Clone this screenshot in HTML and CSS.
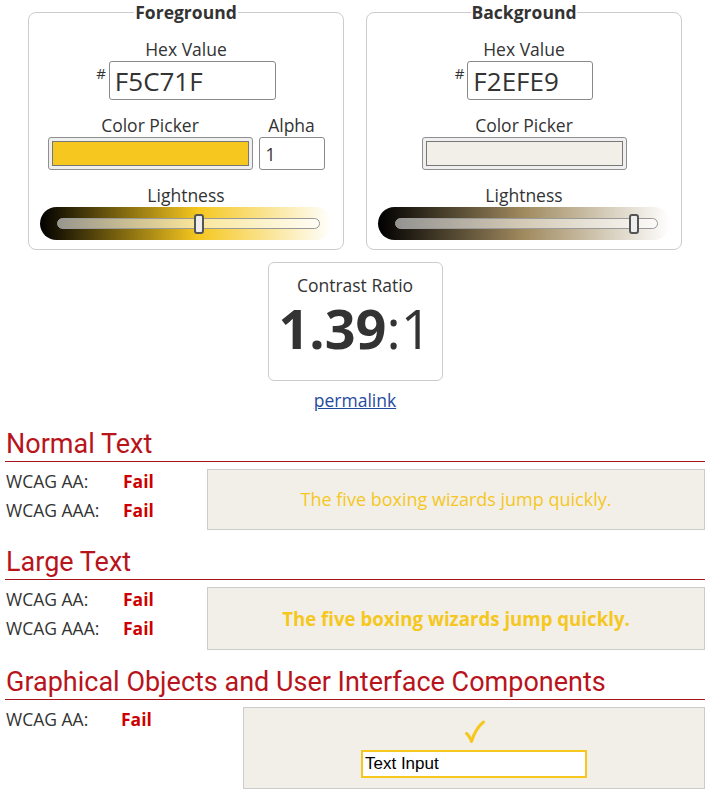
FILE: index.html
```html
<!DOCTYPE html>
<html lang="en">
<head>
<meta charset="utf-8">
<title>Contrast Checker</title>
<link rel="stylesheet" href="styles.css">
</head>
<body>
<main class="page">
  <div class="pickers">
    <fieldset class="picker">
      <legend>Foreground</legend>
      <div class="label">Hex Value</div>
      <div class="hex-row"><span class="hash">#</span><input class="hex hex-fg" type="text" value="F5C71F"></div>
      <div class="cp-row">
        <div class="cp-col">
          <div class="label">Color Picker</div>
          <input class="swatch" type="color" value="#f5c71f">
        </div>
        <div class="cp-col">
          <div class="label">Alpha</div>
          <input class="alpha" type="text" value="1">
        </div>
      </div>
      <div class="label">Lightness</div>
      <input class="slider slider-fg" type="range" min="0" max="100" value="54">
    </fieldset>
    <fieldset class="picker">
      <legend>Background</legend>
      <div class="label">Hex Value</div>
      <div class="hex-row"><span class="hash">#</span><input class="hex hex-bg" type="text" value="F2EFE9"></div>
      <div class="cp-row">
        <div class="cp-col">
          <div class="label">Color Picker</div>
          <input class="swatch" type="color" value="#f2efe9">
        </div>
      </div>
      <div class="label">Lightness</div>
      <input class="slider slider-bg" type="range" min="0" max="100" value="93">
    </fieldset>
  </div>

  <div class="ratio-box">
    <div class="ratio-label">Contrast Ratio</div>
    <div class="ratio"><b>1.39</b>:1</div>
  </div>
  <div class="permalink-row"><a href="#" class="permalink">permalink</a></div>

  <section class="result">
    <h2>Normal Text</h2>
    <div class="result-body">
      <div class="grades">
        <div class="grade"><span class="lvl">WCAG AA:</span><span class="fail">Fail</span></div>
        <div class="grade"><span class="lvl">WCAG AAA:</span><span class="fail">Fail</span></div>
      </div>
      <div class="sample sample-normal">The five boxing wizards jump quickly.</div>
    </div>
  </section>

  <section class="result">
    <h2>Large Text</h2>
    <div class="result-body">
      <div class="grades">
        <div class="grade"><span class="lvl">WCAG AA:</span><span class="fail">Fail</span></div>
        <div class="grade"><span class="lvl">WCAG AAA:</span><span class="fail">Fail</span></div>
      </div>
      <div class="sample sample-large">The five boxing wizards jump quickly.</div>
    </div>
  </section>

  <section class="result">
    <h2>Graphical Objects and User Interface Components</h2>
    <div class="result-body">
      <div class="grades grades-wide">
        <div class="grade"><span class="lvl lvl-narrow">WCAG AA:</span><span class="fail">Fail</span></div>
      </div>
      <div class="sample sample-ui">
        <svg class="check" width="22" height="24" viewBox="0 0 22 24" aria-hidden="true">
          <path d="M2.5 13.5 C4.5 15 6 17.5 7.5 21.5 C10 13 14 6.5 19.5 2" fill="none" stroke="#f5c71f" stroke-width="3" stroke-linecap="round" stroke-linejoin="round"/>
        </svg>
        <input class="ui-input" type="text" value="Text Input">
      </div>
    </div>
  </section>
</main>
</body>
</html>
```
FILE: styles.css
```css
* { box-sizing: border-box; }
html, body { margin: 0; padding: 0; background: #fff; }
body {
  font-family: "Open Sans", "DejaVu Sans", sans-serif;
  color: #333;
  font-size: 17.5px;
  line-height: 24px;
}
.page {
  width: 700px;
  margin-left: 5px;
}
.pickers {
  display: flex;
  justify-content: center;
  gap: 22px;
}
.picker {
  width: 316px;
  margin: 0;
  border: 1px solid #cccccc;
  border-radius: 8px;
  padding: 13px 0 9px;
  display: flex;
  flex-direction: column;
  align-items: center;
}
.picker legend {
  margin: 0 auto;
  padding: 0 1px;
  font-weight: 700;
  font-size: 17.5px;
  line-height: 24px;
  color: #333;
}
.label {
  text-align: center;
  font-size: 17.5px;
  line-height: 24px;
  color: #333;
}
.hex-row {
  display: flex;
  align-items: flex-start;
  margin-bottom: 13px;
}
.hash {
  font-size: 15px;
  line-height: 18px;
  margin-top: 3px;
  margin-right: 3px;
}
.hex {
  height: 39px;
  border: 1px solid #8a8a8a;
  border-radius: 3px;
  font-family: "Open Sans", sans-serif;
  font-size: 26px;
  color: #333;
  padding: 0 5px;
  background: #fff;
}
.hex-fg { width: 167px; }
.hex-bg { width: 126px; }
.cp-row {
  display: flex;
  gap: 6px;
  margin-bottom: 13px;
}
.cp-col {
  display: flex;
  flex-direction: column;
  align-items: center;
}
.swatch {
  -webkit-appearance: none;
  appearance: none;
  width: 205px;
  height: 33px;
  padding: 3px 3px;
  border: 1px solid #8f8f8f;
  border-radius: 3px;
  background: #efefef;
  margin: 0;
}
.swatch::-webkit-color-swatch-wrapper { padding: 0; }
.swatch::-webkit-color-swatch { border: 1px solid #777; border-radius: 0; }
.alpha {
  width: 66px;
  height: 33px;
  border: 1px solid #8a8a8a;
  border-radius: 3px;
  font-family: "Open Sans", sans-serif;
  font-size: 17.5px;
  color: #333;
  padding: 0 6px;
  margin: 0;
  background: #fff;
}
.slider {
  -webkit-appearance: none;
  appearance: none;
  width: 292px;
  height: 33px;
  margin: 0;
  padding: 0 12px 0 17px;
  border-radius: 17px;
}
.slider-fg { background: linear-gradient(to right, #000 0%, #f5c71f 54%, #fff 100%); }
.slider-bg { background: linear-gradient(to right, #000 0%, #a08a5f 50%, #fff 100%); }
.slider::-webkit-slider-runnable-track {
  height: 11px;
  border: 1px solid #999;
  border-radius: 6px;
  background: rgba(255, 255, 255, 0.55);
}
.slider::-webkit-slider-thumb {
  -webkit-appearance: none;
  appearance: none;
  width: 10px;
  height: 20px;
  margin-top: -5.5px;
  border: 2px solid #555;
  border-radius: 3px;
  background: #eeeeee;
}
.ratio-box {
  width: 175px;
  margin: 12px auto 0;
  border: 1px solid #cccccc;
  border-radius: 6px;
  padding: 10px 0 25px;
  text-align: center;
}
.ratio-label {
  font-size: 17.5px;
  line-height: 24px;
  margin-bottom: 4px;
}
.ratio {
  font-size: 54px;
  line-height: 54px;
  color: #333;
}
.ratio b { font-weight: 700; }
.permalink-row {
  text-align: center;
  margin-top: 7px;
  line-height: 24px;
}
.permalink {
  color: #1f4a9e;
  text-decoration: underline;
}
.result { margin-top: 15px; }
.result + .result { margin-top: 15px; }
.result h2 {
  margin: 0;
  font-family: Roboto, "Liberation Sans", sans-serif;
  font-weight: 400;
  font-size: 27px;
  line-height: 34px;
  color: #b8141c;
  padding-left: 1px;
  border-bottom: 1px solid #a8141b;
}
.result-body {
  display: flex;
  align-items: flex-start;
}
.grades {
  width: 202px;
  padding-top: 5px;
  padding-left: 1px;
}
.grades-wide { width: 238px; }
.grade {
  display: flex;
  line-height: 29px;
}
.lvl { width: 117px; }
.lvl-narrow { width: 115px; }
.fail {
  color: #cc0000;
  font-weight: 700;
}
.sample {
  flex: 1;
  margin-top: 7px;
  background: #f2efe9;
  border: 1px solid #cccccc;
  text-align: center;
  color: #f5c71f;
}
.sample-normal {
  font-size: 18px;
  line-height: 23px;
  padding: 18px 0;
}
.sample-large {
  font-size: 18.67px;
  font-weight: 700;
  line-height: 25px;
  padding: 18px 0;
}
.sample-ui {
  padding: 12px 0 10px;
  display: flex;
  flex-direction: column;
  align-items: center;
}
.check {
  display: block;
  margin-left: 2px;
}
.ui-input {
  width: 226px;
  height: 28px;
  margin-top: 6px;
  border: 2px solid #f5c71f;
  background: #fff;
  font-family: "Liberation Sans", Arial, sans-serif;
  font-size: 17px;
  color: #000;
  padding: 0 2px;
}
```
